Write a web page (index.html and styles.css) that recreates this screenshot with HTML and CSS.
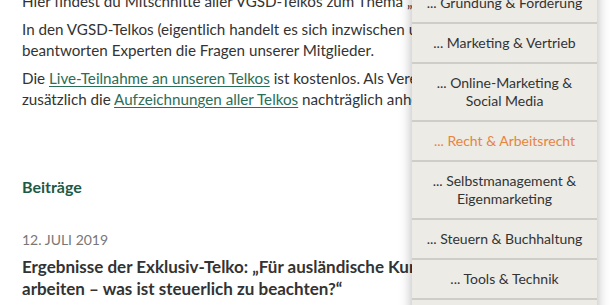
FILE: index.html
```html
<!DOCTYPE html>
<html lang="de">
<head>
  <meta charset="UTF-8" />
  <meta name="viewport" content="width=device-width, initial-scale=1.0"/>
  <title>VGSD Telkos – Recht</title>
  <link rel="stylesheet" href="styles.css">
</head>
<body>
  <div class="page">
    <main class="content">
      <p>Hier findest du Mitschnitte aller VGSD-Telkos zum Thema „Recht &amp; Arbeitsrecht“.</p>
      <p>In den VGSD-Telkos (eigentlich handelt es sich inzwischen um Webinare) beantworten Experten die Fragen unserer Mitglieder.</p>
      <p>Die <a href="#">Live-Teilnahme an unseren Telkos</a> ist kostenlos. Als Vereinsmitglied kannst du zusätzlich die <a href="#">Aufzeichnungen aller Telkos</a> nachträglich anhören.</p>

      <h2 class="section-title">Beiträge</h2>

      <article class="post">
        <div class="post-date">12. Juli 2019</div>
        <h3 class="post-title">Ergebnisse der Exklusiv-Telko: „Für ausländische Kunden arbeiten – was ist steuerlich zu beachten?“</h3>
      </article>
    </main>

    <!-- Themen-Dropdown -->
    <ul class="topic-menu">
      <li><a href="#">... Gründung &amp; Förderung</a></li>
      <li><a href="#">... Marketing &amp; Vertrieb</a></li>
      <li><a href="#">... Online-Marketing &amp;<br>Social Media</a></li>
      <li class="active"><a href="#">... Recht &amp; Arbeitsrecht</a></li>
      <li><a href="#">... Selbstmanagement &amp;<br>Eigenmarketing</a></li>
      <li><a href="#">... Steuern &amp; Buchhaltung</a></li>
      <li><a href="#">... Tools &amp; Technik</a></li>
      <li><a href="#">... Versicherungen</a></li>
    </ul>
  </div>
</body>
</html>
```

FILE: styles.css
```css
* { margin: 0; padding: 0; box-sizing: border-box; }

html, body {
  height: 100%;
  overflow: hidden;
}

body {
  font-family: 'Lato', 'Liberation Sans', sans-serif;
  color: #333;
  background: #fff;
}

.page {
  position: relative;
  display: flow-root;
  height: 100%;
}

.content {
  width: 600px;
  padding: 0 22px;
  margin-top: -9px;
}

.content p {
  font-size: 15.2px;
  line-height: 21px;
  margin-bottom: 7px;
}

.content a {
  color: #2a6e58;
  text-decoration: underline;
  text-underline-offset: 2px;
}

.section-title {
  color: #1d5a45;
  font-size: 16px;
  font-weight: 700;
  margin-top: 67px;
}

.post {
  margin-top: 35px;
}

.post-date {
  font-size: 14px;
  color: #777;
  text-transform: uppercase;
}

.post-title {
  max-width: 460px;
  font-size: 17px;
  line-height: 22px;
  font-weight: 700;
  color: #333;
  margin-top: 8px;
}

/* Dropdown */
.topic-menu {
  position: absolute;
  top: -16px;
  left: 412px;
  width: 185px;
  list-style: none;
  background: #ecebe6;
  box-shadow: 0 0 12px rgba(0, 0, 0, 0.3);
}

.topic-menu li {
  border-bottom: 2px solid #cfcdc7;
  text-align: center;
}

.topic-menu a {
  display: block;
  padding: 10px 8px;
  font-size: 14px;
  line-height: 18px;
  color: #333;
  text-decoration: none;
}

.topic-menu li.active a {
  color: #e8843c;
}
```
